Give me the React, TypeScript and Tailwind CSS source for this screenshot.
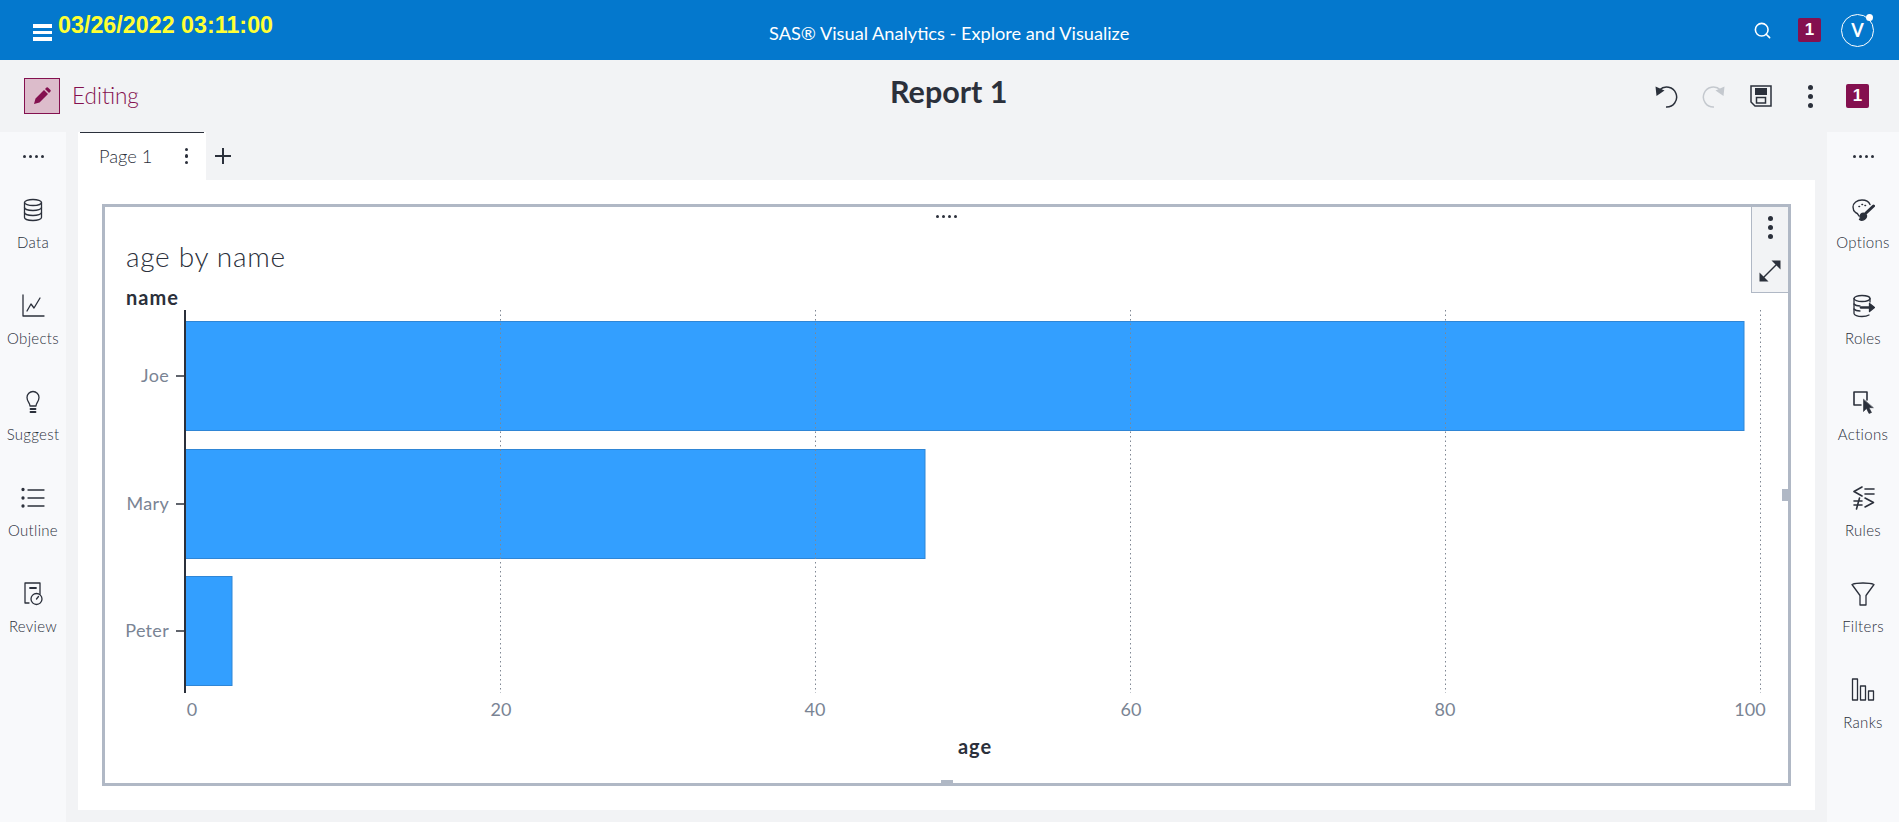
import { Search } from 'lucide-react'
import type { ReactNode } from 'react'

const ink = '#2b303b'

function Icon({ children, size = 24 }: { children: ReactNode; size?: number }) {
  return (
    <svg width={size} height={size} viewBox="0 0 24 24" fill="none" stroke={ink} strokeWidth="1.300" strokeLinecap="round" strokeLinejoin="round">
      {children}
    </svg>
  )
}

const DataIcon = () => (
  <Icon>
    <ellipse cx="12" cy="4.500" rx="8.500" ry="3" />
    <path d="M3.500 4.500v15c0 1.700 3.800 3 8.500 3s8.500-1.300 8.500-3v-15" />
    <path d="M3.500 9.500c0 1.700 3.800 3 8.500 3s8.500-1.300 8.500-3" />
    <path d="M3.500 14.500c0 1.700 3.800 3 8.500 3s8.500-1.300 8.500-3" />
  </Icon>
)

const ObjectsIcon = () => (
  <Icon>
    <path d="M2 1v21h21" />
    <path d="M6 17l4-7 3 4 6-10" />
  </Icon>
)

const SuggestIcon = () => (
  <Icon>
    <path d="M9 16c0-3-3-4.500-3-8.500a6 6 0 0 1 12 0c0 4-3 5.500-3 8.500z" />
    <path d="M9.500 19h5M9.500 22h5" strokeWidth="1.800" />
  </Icon>
)

const OutlineIcon = () => (
  <Icon>
    <path d="M7 4h16M7 12h16M7 20h16" />
    <circle cx="2" cy="3.500" r="1" fill={ink} />
    <circle cx="2" cy="12" r="1" fill={ink} />
    <circle cx="2" cy="20" r="1" fill={ink} />
  </Icon>
)

const ReviewIcon = () => (
  <Icon>
    <path d="M8 21H4V1h15v11" />
    <path d="M9 6h6" strokeWidth="1.800" />
    <circle cx="15.500" cy="17" r="5.500" />
    <path d="M15.500 17l2-2.500" />
  </Icon>
)

const OptionsIcon = () => (
  <Icon>
    <path d="M8 18c-1-2-2-3-3.500-3.500C2.500 13 2 11 2 9c0-4 4-7 9-7 4 0 7 2 8 4.500" strokeWidth="1.400" />
    <path d="M8 8.500h.5M11 6.500h.5M14 7.500h.5" strokeWidth="1.600" />
    <path d="M15 15L22.500 8" strokeWidth="3" />
    <path d="M9 18c1-2.500 3-3.500 5-2.500s2 3.500.5 5-4 2.500-6 1c1.200-.8.800-2 .500-3.500z" fill={ink} />
  </Icon>
)

const RolesIcon = () => (
  <Icon>
    <ellipse cx="11" cy="4.500" rx="8" ry="3" />
    <path d="M3 4.500v15c0 1.500 3.500 3 8 3 3 0 5.500-.6 7-1.500M19 4.500V8" />
    <path d="M3 10c1 1.200 3.500 2 6 2M3 15c1 1.200 3.500 2 6 2" />
    <path d="M10 13.500h9" strokeWidth="2.600" />
    <path d="M18.500 9.500l5 4-5 4z" fill={ink} />
  </Icon>
)

const ActionsIcon = () => (
  <Icon>
    <path d="M10 15H3V2h13v8" strokeWidth="1.600" />
    <path d="M12.500 9.500v12l3-3 2.500 5 2.500-1-2.500-4.800h4z" fill={ink} strokeWidth="0.600" />
  </Icon>
)

const RulesIcon = () => (
  <Icon>
    <g strokeWidth="1.600">
      <path d="M11 1L3 5.500 11 10" />
      <path d="M14 3h9M14 8h9M14 12l8.500 4.500L14 21" />
      <path d="M3 15h8M3 19h8M8.500 12l-3 11" />
    </g>
  </Icon>
)

const FiltersIcon = () => (
  <Icon>
    <path d="M1 2.500c5-2 17-2 22 0L15 13.500V23H9v-9.500z" />
  </Icon>
)

const RanksIcon = () => (
  <Icon>
    <rect x="1.500" y="1" width="5" height="21" />
    <rect x="9.500" y="8" width="5" height="14" />
    <rect x="17.500" y="13" width="5" height="9" />
  </Icon>
)

function RailItem({ icon, label }: { icon: ReactNode; label: string }) {
  return (
    <div className="flex h-[96px] flex-col items-center">
      <div className="flex h-[24px] items-center justify-center">{icon}</div>
      <span className="mt-[11px] text-[15px] leading-[18px] font-light tracking-[0.3px] text-[#2b303b]">{label}</span>
    </div>
  )
}

function Dots({ className = '' }: { className?: string }) {
  return (
    <div className={`flex gap-[3px] ${className}`}>
      <span className="size-[3px] rounded-full bg-[#2b303b]" />
      <span className="size-[3px] rounded-full bg-[#2b303b]" />
      <span className="size-[3px] rounded-full bg-[#2b303b]" />
      <span className="size-[3px] rounded-full bg-[#2b303b]" />
    </div>
  )
}

function Kebab({ dot = 'size-[5px]', gap = 'gap-[4px]' }: { dot?: string; gap?: string }) {
  return (
    <div className={`flex flex-col items-center ${gap}`}>
      <span className={`${dot} rounded-full bg-[#2b303b]`} />
      <span className={`${dot} rounded-full bg-[#2b303b]`} />
      <span className={`${dot} rounded-full bg-[#2b303b]`} />
    </div>
  )
}

function Badge() {
  return (
    <div className="flex h-[24px] w-[23px] items-center justify-center rounded-[2px] bg-[#84104f] font-['Liberation_Sans',sans-serif] text-[17px] font-bold text-white">
      1
    </div>
  )
}

function Rail({ items }: { items: { icon: ReactNode; label: string }[] }) {
  return (
    <div className="flex h-full flex-col items-center bg-[#f8f9fb]">
      <Dots className="mt-[23px] mb-[40px]" />
      {items.map((item) => (
        <RailItem key={item.label} icon={item.icon} label={item.label} />
      ))}
    </div>
  )
}

const leftItems = [
  { icon: <DataIcon />, label: 'Data' },
  { icon: <ObjectsIcon />, label: 'Objects' },
  { icon: <SuggestIcon />, label: 'Suggest' },
  { icon: <OutlineIcon />, label: 'Outline' },
  { icon: <ReviewIcon />, label: 'Review' },
]

const rightItems = [
  { icon: <OptionsIcon />, label: 'Options' },
  { icon: <RolesIcon />, label: 'Roles' },
  { icon: <ActionsIcon />, label: 'Actions' },
  { icon: <RulesIcon />, label: 'Rules' },
  { icon: <FiltersIcon />, label: 'Filters' },
  { icon: <RanksIcon />, label: 'Ranks' },
]

const bars = [
  { name: 'Joe', y: 321, right: 1744 },
  { name: 'Mary', y: 449, right: 925 },
  { name: 'Peter', y: 576, right: 232 },
]

const ticks = [
  { value: 0, line: 0, label: 192 },
  { value: 20, line: 500, label: 501 },
  { value: 40, line: 815, label: 815 },
  { value: 60, line: 1130, label: 1131 },
  { value: 80, line: 1445, label: 1445 },
  { value: 100, line: 1760, label: 1750 },
]

// coordinates in the viewBox are the page's own, so they read straight off the reference
function BarChart() {
  return (
    <svg width="1683" height="470" viewBox="105 305 1683 470" className="block">
      {bars.map((b) => (
        <g key={b.name}>
          <rect x="185.500" y={b.y + 0.5} width={b.right - 185.5} height="109" fill="#339fff" stroke="#2f86d6" />
          <line x1="176" x2="185" y1={b.y + 55} y2={b.y + 55} stroke={ink} strokeWidth="1.500" />
          <text x="169" y={b.y + 61} textAnchor="end" fontSize="18" letterSpacing="0.3" fill="#7a8494">{b.name}</text>
        </g>
      ))}
      {ticks.filter((t) => t.line > 0).map((t) => (
        <line key={t.value} x1={t.line + 0.5} x2={t.line + 0.5} y1="310" y2="693" stroke="#7f8793" strokeDasharray="1.500 3" />
      ))}
      <line x1="185" x2="185" y1="310" y2="693" stroke={ink} strokeWidth="2" />
      {ticks.map((t) => (
        <text key={t.value} x={t.label} y="716" textAnchor="middle" fontSize="18" fill="#7a8494">{t.value}</text>
      ))}
      <text x="975" y="754" textAnchor="middle" fontSize="20" fontWeight="700" letterSpacing="1" fill={ink}>age</text>
    </svg>
  )
}

export default function App() {
  return (
    <div className="flex h-[822px] w-[1899px] flex-col overflow-hidden bg-[#f2f3f5] font-['Lato',sans-serif]">
      {/* Top banner */}
      <header className="relative flex h-[60px] items-center bg-[#0478cd] text-white">
        <div className="ml-[33px] flex w-[19px] flex-col gap-[2.500px] self-start pt-[24px]">
          <span className="h-[4px] bg-white" />
          <span className="h-[3.500px] bg-white" />
          <span className="h-[4px] bg-white" />
        </div>
        <span className="ml-[6px] self-start pt-[12px] font-['Liberation_Sans',sans-serif] text-[23.300px] leading-[27px] font-bold text-[#ffff33]">
          03/26/2022 03:11:00
        </span>
        <span className="absolute left-[769px] top-[22px] text-[18.200px] leading-[22px]">SAS® Visual Analytics - Explore and Visualize</span>
        <div className="ml-auto flex items-center">
          <Search size={19} strokeWidth={2} className="mr-[26px]" />
          <Badge />
          <div className="relative ml-[20px] mr-[25px] flex size-[33px] items-center justify-center rounded-full border border-white text-[18px] font-bold">
            V
            <span className="absolute -top-[0.500px] right-[0.500px] size-[7px] rounded-full bg-white" />
          </div>
        </div>
      </header>

      {/* Report toolbar */}
      <div className="relative flex h-[72px] items-center">
        <div className="ml-[24px] flex size-[36px] items-center justify-center border border-[#84104f] bg-[#dcbccb]">
          <svg width="20" height="20" viewBox="0 0 20 20" fill="#84104f">
            <path d="M2 18l1.500-5.500L12 4l4 4-8.500 8.500zM13 3l1.500-1.500a1 1 0 0 1 1.400 0l2.600 2.600a1 1 0 0 1 0 1.400L17 7z" />
          </svg>
        </div>
        <span className="ml-[12px] text-[22.500px] font-light text-[#84104f]">Editing</span>
        <span className="absolute left-[890px] top-[13px] text-[30.500px] leading-[36px] font-bold text-[#2b303b]">Report 1</span>
        <div className="ml-auto flex items-center">
          <svg width="24" height="24" viewBox="0 0 24 24" fill="none" stroke={ink} strokeWidth="1.500" className="mr-[24px]">
            <path d="M5.500 6A10 10 0 1 1 12 23" />
            <path d="M1.500 2.500l1 9.500 8-5.500z" fill={ink} stroke="none" />
          </svg>
          <svg width="24" height="24" viewBox="0 0 24 24" fill="none" stroke="#c4c8ce" strokeWidth="1.500" className="mr-[24px]">
            <path d="M18.500 6A10 10 0 1 0 12 23" />
            <path d="M22.500 2.500l-1 9.500-8-5.500z" fill="#c4c8ce" stroke="none" />
          </svg>
          <svg width="22" height="22" viewBox="0 0 22 22" fill="none" stroke={ink} strokeWidth="1.500" className="mr-[36px]">
            <path d="M1 1h20v20H5l-4-4z" />
            <rect x="5" y="3" width="12" height="7" fill={ink} stroke="none" />
            <rect x="6.500" y="12.500" width="9" height="5.500" />
          </svg>
          <Kebab />
          <div className="ml-[33px] mr-[30px]">
            <Badge />
          </div>
        </div>
      </div>

      <div className="flex flex-1">
        <div className="w-[66px]">
          <Rail items={leftItems} />
        </div>

        <main className="flex flex-1 flex-col px-[12px] pb-[12px]">
          {/* Page tabs */}
          <div className="flex h-[48px] items-center">
            <div className="relative flex h-[48px] w-[128px] items-center bg-white pl-[21px]">
              <span className="absolute left-[2px] right-[2px] top-0 h-px bg-[#2b303b]" />
              <span className="mt-[2px] text-[18.300px] font-light text-[#2b303b]">Page 1</span>
              <div className="ml-auto mr-[18px]">
                <Kebab dot="size-[3.500px]" gap="gap-[3px]" />
              </div>
            </div>
            <svg width="16" height="16" viewBox="0 0 16 16" stroke={ink} strokeWidth="2" className="ml-[9px]">
              <path d="M8 0v16M0 8h16" />
            </svg>
          </div>

          <div className="flex-1 bg-white p-6">
            {/* Report object */}
            <div className="relative h-[582px] border-[3px] border-[#b0b8c5]">
              <Dots className="absolute left-[831px] top-[8px]" />
              <span className="absolute -bottom-[3px] left-[836px] h-[6px] w-[12px] bg-[#b0b8c5]" />
              <span className="absolute right-0 top-[282px] h-[12px] w-[6px] bg-[#b0b8c5]" />
              <div className="absolute right-0 top-0 flex h-[86px] w-[37px] flex-col items-center border-b border-l border-[#b0b8c5] bg-[#f2f3f5] pt-[9px]">
                <Kebab dot="size-[5px]" gap="gap-[4px]" />
                <svg width="26" height="26" viewBox="0 0 26 26" fill={ink} stroke={ink} className="mt-[19px]">
                  <path d="M4 22L22 4" strokeWidth="1.500" fill="none" />
                  <path d="M14.500 2.500h9v9z" stroke="none" />
                  <path d="M2.500 14.500v9h9z" stroke="none" />
                </svg>
              </div>

              <h2 className="pl-[21px] pt-[32px] text-[28px] leading-[34px] font-light tracking-[0.7px] text-[#2b303b]">age by name</h2>
              <div className="h-[32px] pl-[21px] pt-[13px] text-[20px] leading-[22px] font-bold tracking-[1px] text-[#2b303b]">name</div>
              <BarChart />
            </div>
          </div>
        </main>

        <div className="w-[72px]">
          <Rail items={rightItems} />
        </div>
      </div>
    </div>
  )
}
